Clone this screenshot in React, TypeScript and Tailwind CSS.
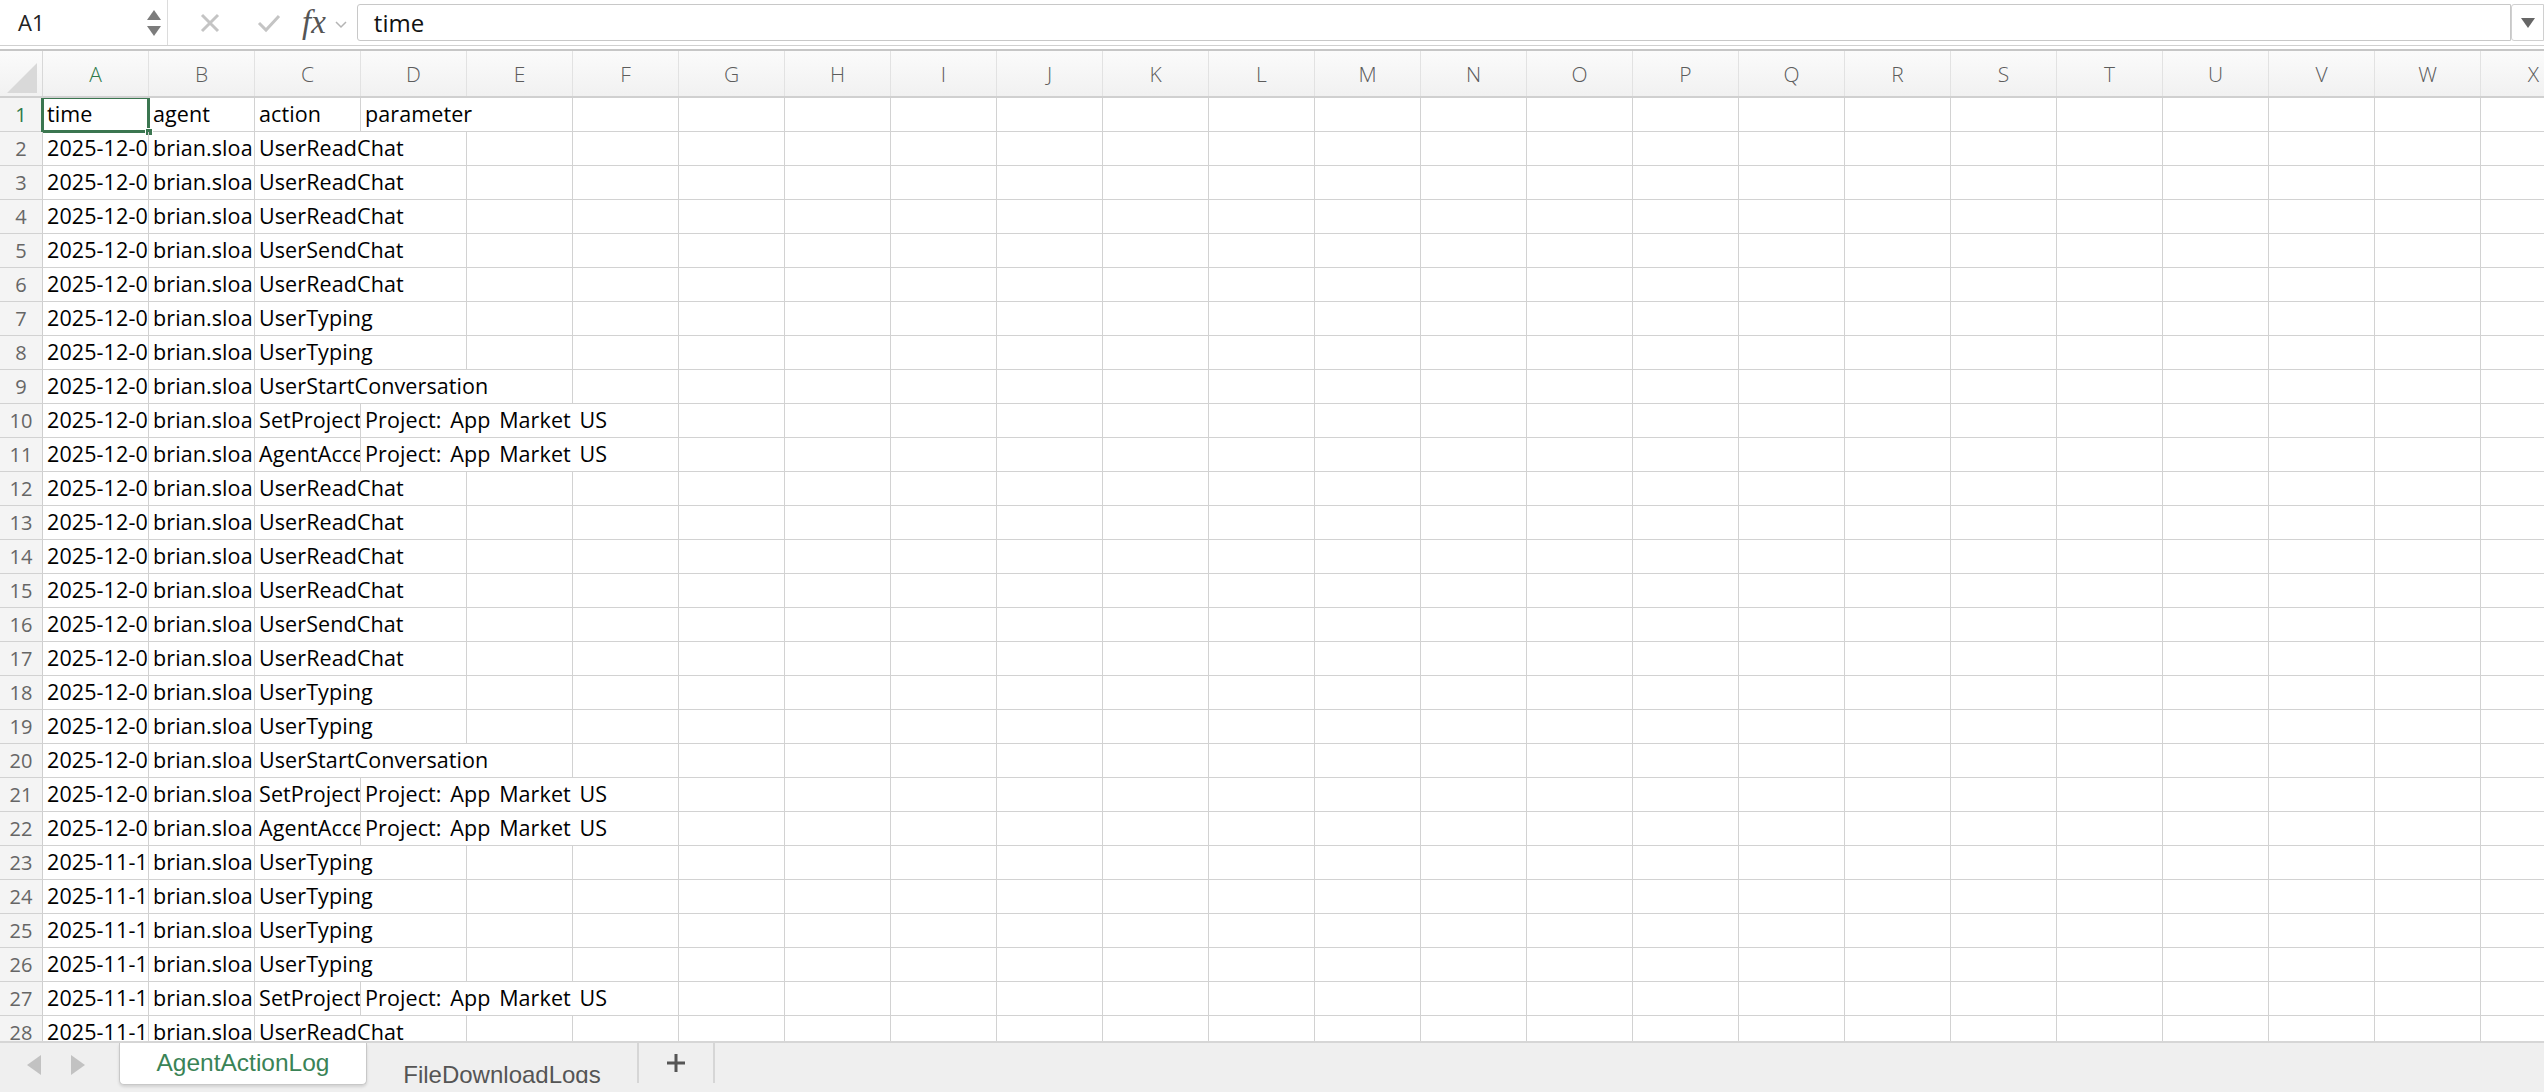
import React from "react";

const COLS = "ABCDEFGHIJKLMNOPQRSTUVWX".split("");
const COL_W = 106;

type Cell = { text: string; span?: number };
type Row = Cell[];

const T12 = "2025-12-03 14:22:05";
const T11 = "2025-11-18 09:41:37";
const AG = "brian.sloan@company.com";

const r = (time: string, action: string, span = 2, param?: string): Row => {
  const cells: Row = [{ text: time }, { text: AG }];
  if (param) {
    cells.push({ text: action });
    cells.push({ text: param, span: 3 });
  } else {
    cells.push({ text: action, span });
  }
  return cells;
};

const rows: Row[] = [
  [{ text: "time" }, { text: "agent" }, { text: "action" }, { text: "parameter", span: 2 }],
  r(T12, "UserReadChat"),
  r(T12, "UserReadChat"),
  r(T12, "UserReadChat"),
  r(T12, "UserSendChat"),
  r(T12, "UserReadChat"),
  r(T12, "UserTyping"),
  r(T12, "UserTyping"),
  r(T12, "UserStartConversation", 3),
  r(T12, "SetProjectContext", 1, "Project: App Market US"),
  r(T12, "AgentAcceptedProject", 1, "Project: App Market US"),
  r(T12, "UserReadChat"),
  r(T12, "UserReadChat"),
  r(T12, "UserReadChat"),
  r(T12, "UserReadChat"),
  r(T12, "UserSendChat"),
  r(T12, "UserReadChat"),
  r(T12, "UserTyping"),
  r(T12, "UserTyping"),
  r(T12, "UserStartConversation", 3),
  r(T12, "SetProjectContext", 1, "Project: App Market US"),
  r(T12, "AgentAcceptedProject", 1, "Project: App Market US"),
  r(T11, "UserTyping"),
  r(T11, "UserTyping"),
  r(T11, "UserTyping"),
  r(T11, "UserTyping"),
  r(T11, "SetProjectContext", 1, "Project: App Market US"),
  r(T11, "UserReadChat"),
];

const FormulaBar = () => (
  <div className="flex h-[46px] items-stretch border-b border-[#d0d0d0] bg-white">
    <div className="flex w-[168px] shrink-0 items-center justify-between border-r border-[#dcdcdc] pl-[18px] pr-[6px]">
      <span className="text-[22px] text-[#222]">A1</span>
      <div className="flex flex-col items-center gap-[6px]">
        <svg width="14" height="10" viewBox="0 0 14 10">
          <path d="M7 0 L14 10 L0 10 Z" fill="#7c7c7c" />
        </svg>
        <svg width="14" height="10" viewBox="0 0 14 10">
          <path d="M0 0 L14 0 L7 10 Z" fill="#7c7c7c" />
        </svg>
      </div>
    </div>
    <div className="flex items-center pl-[32px]">
      <svg width="20" height="20" viewBox="0 0 20 20">
        <path d="M2 2 L18 18 M18 2 L2 18" stroke="#c4c4c4" strokeWidth="3" />
      </svg>
      <svg width="24" height="20" viewBox="0 0 24 20" className="ml-[37px]">
        <path d="M2 10 L9 17 L22 3" stroke="#c4c4c4" strokeWidth="3" fill="none" />
      </svg>
      <span className="ml-[21px] font-['Liberation_Serif',serif] text-[33px] italic text-[#555]">fx</span>
      <svg width="12" height="8" viewBox="0 0 12 8" className="ml-[9px] mt-[4px]">
        <path d="M1 1 L6 6 L11 1" stroke="#b4b4b4" strokeWidth="1.5" fill="none" />
      </svg>
    </div>
    <div className="my-[4px] ml-[10px] flex flex-1 items-center rounded-l-[3px] border border-[#c8c8c8] pl-[16px]">
      <span className="text-[24px] text-[#111]">time</span>
    </div>
    <div className="my-[4px] flex w-[33px] items-center justify-center rounded-l-[3px] border border-[#d0d0d0]">
      <svg width="14" height="10" viewBox="0 0 14 10">
        <path d="M0 0 L14 0 L7 10 Z" fill="#666" />
      </svg>
    </div>
  </div>
);

const ColumnHeader = () => (
  <div className="flex h-[47px] shrink-0 border-b-2 border-[#d0d0d0] bg-gradient-to-b from-[#fbfbfb] to-[#f1f1f1]">
    <div className="relative w-[43px] shrink-0 border-r border-[#d8d8d8]">
      <svg width="30" height="30" viewBox="0 0 30 30" className="absolute bottom-[3px] right-[5px]">
        <path d="M30 0 L30 30 L0 30 Z" fill="#d9d9d9" />
      </svg>
    </div>
    {COLS.map((c) => (
      <div
        key={c}
        className={`flex shrink-0 items-center justify-center border-r border-[#e2e2e2] pt-[2px] text-[21px] font-light ${
          c === "A" ? "text-[#2f7a48]" : "text-[#5c5c5c]"
        }`}
        style={{ width: COL_W }}
      >
        {c}
      </div>
    ))}
  </div>
);

const GridRow = ({ cells, index }: { cells: Row; index: number }) => {
  const used = cells.reduce((n, c) => n + (c.span ?? 1), 0);
  const empties = COLS.length - used;
  return (
    <div className="relative flex h-[34px] shrink-0 border-b border-[#d2d2d2]">
      <div
        className={`flex w-[43px] shrink-0 items-center justify-center border-r border-[#cfcfcf] bg-[#f4f4f4] text-[20px] ${
          index === 1 ? "text-[#2f7a48]" : "text-[#666]"
        }`}
      >
        {index}
      </div>
      {cells.map((c, i) => (
        <div
          key={i}
          className="flex shrink-0 items-center overflow-hidden whitespace-nowrap border-r border-[#d2d2d2] pl-[4px] text-[21.5px] tracking-[0.1px] text-black [word-spacing:3px]"
          style={{ width: COL_W * (c.span ?? 1) }}
        >
          {c.text}
        </div>
      ))}
      {Array.from({ length: empties }).map((_, i) => (
        <div key={`e${i}`} className="shrink-0 border-r border-[#d2d2d2]" style={{ width: COL_W }} />
      ))}
      {index === 1 && (
        <div className="absolute left-[41px] top-[-2px] h-[37px] w-[109px] border-[3px] border-[#3b7650]">
          <div className="absolute bottom-[-6px] right-[-6px] h-[8px] w-[8px] border border-white bg-[#3b7650]" />
        </div>
      )}
    </div>
  );
};

const TabBar = () => (
  <div className="flex h-[51px] shrink-0 items-stretch border-t-2 border-[#d6d6d6] bg-[#efefef]">
    <div className="flex w-[119px] items-center gap-[30px] pl-[27px] pb-[6px]">
      <svg width="14" height="20" viewBox="0 0 14 20">
        <path d="M14 0 L14 20 L0 10 Z" fill="#c2c2c2" />
      </svg>
      <svg width="14" height="20" viewBox="0 0 14 20">
        <path d="M0 0 L0 20 L14 10 Z" fill="#c2c2c2" />
      </svg>
    </div>
    <div className="mb-[7px] flex w-[248px] items-center justify-center rounded-b-[5px] border border-t-0 border-[#c8c8c8] bg-white font-['Liberation_Sans',sans-serif] text-[24.5px] text-[#3a8356] shadow-[0_2px_3px_rgba(0,0,0,0.12)]">
      AgentActionLog
    </div>
    <div className="mb-[9px] flex w-[272px] items-end justify-center overflow-hidden border-r-2 border-[#d6d6d6] font-['Liberation_Sans',sans-serif] text-[24px] leading-[30px] text-[#555]">
      <span className="translate-y-[7px]">FileDownloadLogs</span>
    </div>
    <div className="mb-[9px] flex w-[76px] items-center justify-center border-r-2 border-[#d6d6d6]">
      <svg width="20" height="20" viewBox="0 0 20 20">
        <path d="M10 1 V19 M1 10 H19" stroke="#555" strokeWidth="3" />
      </svg>
    </div>
    <div className="flex-1" />
  </div>
);

export default function App() {
  return (
    <div className="flex h-[1092px] w-[2544px] flex-col overflow-hidden bg-white font-['Open_Sans',sans-serif]">
      <FormulaBar />
      <div className="h-[5px] shrink-0 border-b-2 border-[#c6c6c6] bg-white" />
      <ColumnHeader />
      <div className="flex flex-1 flex-col overflow-hidden">
        {rows.map((cells, i) => (
          <GridRow key={i} cells={cells} index={i + 1} />
        ))}
      </div>
      <TabBar />
    </div>
  );
}
